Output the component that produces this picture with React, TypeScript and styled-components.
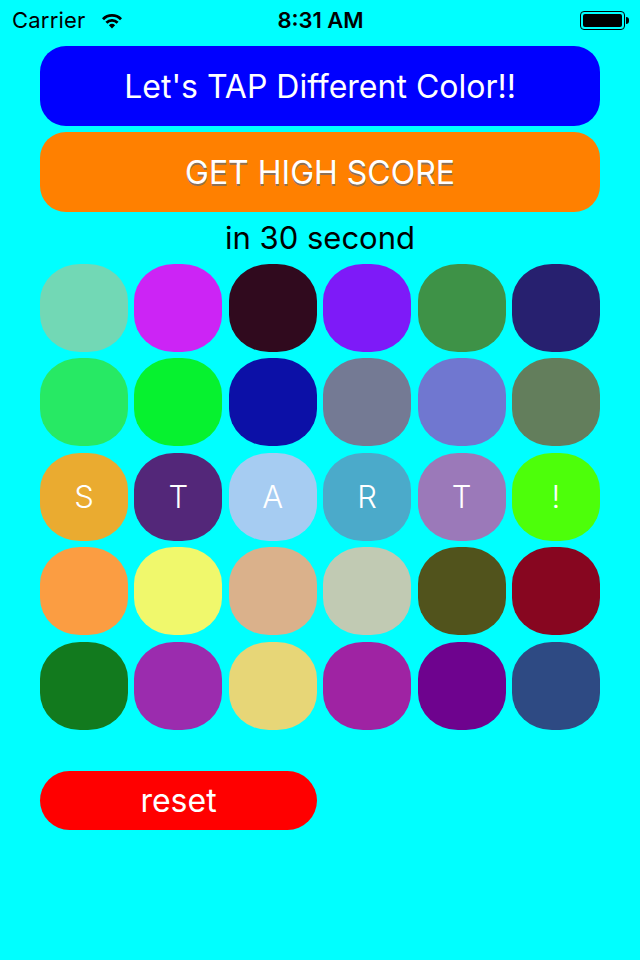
import React from "react";
import styled, { createGlobalStyle } from "styled-components";

const Global = createGlobalStyle`
  html, body { margin: 0; padding: 0; background: #00ffff; }
  body { font-family: Inter, Roboto, "Liberation Sans", sans-serif; }
`;

const Screen = styled.div`
  width: 640px;
  height: 960px;
  background: #00ffff;
  display: flex;
  flex-direction: column;
`;

const StatusBar = styled.div`
  height: 40px;
  display: grid;
  grid-template-columns: 1fr auto 1fr;
  align-items: center;
  padding: 0 11px 0 12px;
  font-size: 22px;
  color: #000;
`;

const Carrier = styled.div`
  display: flex;
  align-items: center;
  gap: 14px;
  letter-spacing: 0.2px;
`;

const Time = styled.div`
  font-weight: 600;
  font-size: 22px;
`;

const BatteryWrap = styled.div`
  justify-self: end;
  display: flex;
  align-items: center;
`;

const BatteryBody = styled.div`
  width: 45px;
  height: 19px;
  border: 1px solid #000;
  border-radius: 4px;
  padding: 2px;
  box-sizing: border-box;
  display: flex;
`;

const BatteryFill = styled.div`
  flex: 1;
  background: #000;
  border-radius: 2px;
`;

const BatteryTip = styled.div`
  width: 3px;
  height: 7px;
  background: #000;
  border-radius: 0 3px 3px 0;
  margin-left: 1px;
`;

const Content = styled.div`
  padding: 6px 40px 0;
  display: flex;
  flex-direction: column;
`;

const Banner = styled.div<{ $bg: string; $shadow?: boolean }>`
  height: 80px;
  border-radius: 26px;
  background: ${(p) => p.$bg};
  color: #fff;
  font-size: 32px;
  display: flex;
  align-items: center;
  justify-content: center;
  text-shadow: ${(p) => (p.$shadow ? "0 1.5px 0 rgba(110,110,110,0.8)" : "none")};
  & + & {
    margin-top: 6px;
  }
`;

const Caption = styled.div`
  text-align: center;
  font-size: 31px;
  color: #000;
  height: 52px;
  line-height: 52px;
`;

const Grid = styled.div`
  display: grid;
  grid-template-columns: repeat(6, 88px);
  grid-auto-rows: 88px;
  column-gap: 6.4px;
  row-gap: 6.4px;
`;

const Cell = styled.div<{ $bg: string }>`
  background: ${(p) => p.$bg};
  border-radius: 40px / 37px;
  display: flex;
  align-items: center;
  justify-content: center;
  color: #fff;
  font-size: 31px;
  font-weight: 300;
`;

const ResetButton = styled.div`
  margin-top: 41px;
  width: 277px;
  height: 59px;
  border-radius: 30px;
  background: #ff0000;
  color: #fff;
  font-size: 32px;
  display: flex;
  align-items: center;
  justify-content: center;
`;

const colors = [
  "#72D8B5", "#CC24F5", "#300A1E", "#7E1AF8", "#3E9247", "#27206F",
  "#27E964", "#06F22F", "#0C10A7", "#747A94", "#7077D0", "#637E5C",
  "#EAAB30", "#532779", "#A6CCF2", "#4BAACA", "#9B79B9", "#4DFF0A",
  "#FB9D42", "#F0F86C", "#DAB18B", "#C1CAB3", "#51531C", "#870620",
  "#127A1E", "#9B2CAE", "#E7D677", "#9F23A3", "#6E038E", "#2E4A83",
];

const letters: Record<number, string> = { 12: "S", 13: "T", 14: "A", 15: "R", 16: "T", 17: "!" };

const Wifi = () => (
  <svg width="24" height="17" viewBox="0 0 22 17">
    <path d="M1 6.2 A14 14 0 0 1 21 6.2 L19 8.3 A11 11 0 0 0 3 8.3 Z" fill="#000" />
    <path d="M4.4 9.7 A9.3 9.3 0 0 1 17.6 9.7 L15.6 11.8 A6.4 6.4 0 0 0 6.4 11.8 Z" fill="#000" />
    <path d="M7.9 13.2 A4.5 4.5 0 0 1 14.1 13.2 L11 16.4 Z" fill="#000" />
  </svg>
);

export default function App() {
  return (
    <Screen>
      <Global />
      <StatusBar>
        <Carrier>
          Carrier
          <Wifi />
        </Carrier>
        <Time>8:31 AM</Time>
        <BatteryWrap>
          <BatteryBody>
            <BatteryFill />
          </BatteryBody>
          <BatteryTip />
        </BatteryWrap>
      </StatusBar>
      <Content>
        <Banner $bg="#0000ff">Let's TAP Different Color!!</Banner>
        <Banner $bg="#ff8000" $shadow>GET HIGH SCORE</Banner>
        <Caption>in 30 second</Caption>
        <Grid>
          {colors.map((c, i) => (
            <Cell key={i} $bg={c}>{letters[i] ?? ""}</Cell>
          ))}
        </Grid>
        <ResetButton>reset</ResetButton>
      </Content>
    </Screen>
  );
}
